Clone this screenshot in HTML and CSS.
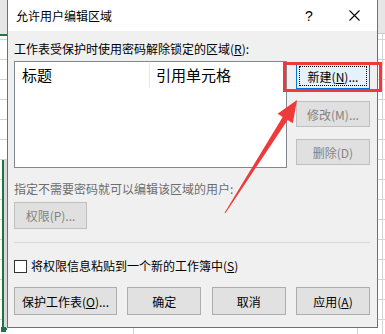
FILE: index.html
```html
<!DOCTYPE html>
<html lang="zh-CN">
<head>
<meta charset="utf-8">
<title>允许用户编辑区域</title>
<link rel="stylesheet" href="styles.css">
</head>
<body>
<div class="sheet">
  <div class="sheet-left"><div class="sel"></div><div class="handle"></div></div>
  <div class="sheet-right"></div>
</div>

<div class="dialog">
  <div class="titlebar">
    <span class="title">允许用户编辑区域</span>
    <span class="tb-btn help">?</span>
    <span class="tb-btn close">
      <svg width="11" height="11" viewBox="0 0 11 11"><path d="M0.5 0.5 L10.5 10.5 M10.5 0.5 L0.5 10.5" stroke="#000" stroke-width="1.1" fill="none"/></svg>
    </span>
  </div>
  <div class="content">
    <div class="label">工作表受保护时使用密码解除锁定的区域(<u>R</u>):</div>
    <div class="top-row">
      <div class="listbox">
        <div class="lhead">
          <div class="col col1">标题</div>
          <div class="col col2">引用单元格</div>
        </div>
      </div>
      <div class="side">
        <button class="btn focused"><span class="ring">新建(<u>N</u>)...</span></button>
        <button class="btn" disabled>修改(M)...</button>
        <button class="btn" disabled>删除(D)</button>
      </div>
    </div>
    <div class="label dim">指定不需要密码就可以编辑该区域的用户:</div>
    <button class="btn perm" disabled>权限(P)...</button>
    <div class="sep"></div>
    <div class="check"><span class="box"></span><span>将权限信息粘贴到一个新的工作簿中(<u>S</u>)</span></div>
    <div class="footer">
      <button class="btn wide">保护工作表(<u>O</u>)...</button>
      <button class="btn">确定</button>
      <button class="btn">取消</button>
      <button class="btn">应用(<u>A</u>)</button>
    </div>
  </div>
</div>

<div class="annot-rect"></div>
<svg class="arrow" width="385" height="334" viewBox="0 0 385 334">
  <polygon points="224.6,212.7 225.4,213.3 287.7,120.1 292.8,123.3 297,100 277.6,113.7 282.7,116.9" fill="#f03a3a"/>
</svg>
</body>
</html>
```

FILE: styles.css
```css
* { box-sizing: border-box; }

body {
  margin: 0;
  width: 385px;
  height: 334px;
  overflow: hidden;
  position: relative;
  background-color: #ffffff;
  background-image:
    linear-gradient(to right, transparent 133px, #d4d4d4 133px, #d4d4d4 134px, transparent 134px),
    linear-gradient(to right, transparent 357px, #d4d4d4 357px, #d4d4d4 358px, transparent 358px);
  font-family: "Noto Sans CJK SC", "Microsoft YaHei", sans-serif;
  font-size: 12px;
  color: #000;
}

/* spreadsheet behind the dialog */
.sheet-left {
  position: absolute;
  left: 0;
  top: 0;
  width: 7px;
  height: 334px;
  background:
    linear-gradient(#e6e6e6 0, #e6e6e6 34px, #217346 34px, #217346 36px, transparent 36px),
    repeating-linear-gradient(#ffffff 0, #ffffff 19px, #d4d4d4 19px, #d4d4d4 20px);
}
.sel {
  position: absolute;
  left: 2px;
  top: 160px;
  width: 5px;
  height: 170px;
  border-left: 2px solid #217346;
  border-bottom: 2px solid #217346;
  background: #d9d9d9;
}
.handle {
  position: absolute;
  left: 1px;
  top: 327px;
  width: 5px;
  height: 5px;
  background: #217346;
}
.sheet-right {
  position: absolute;
  left: 378px;
  top: 0;
  width: 7px;
  height: 334px;
  background:
    linear-gradient(#e6e6e6 0, #e6e6e6 33px, #c8c8c8 33px, #c8c8c8 34px, transparent 34px),
    linear-gradient(to right, transparent 4px, #d4d4d4 4px, #d4d4d4 5px, transparent 5px),
    repeating-linear-gradient(#ffffff 0, #ffffff 19px, #d4d4d4 19px, #d4d4d4 20px);
}

/* dialog window */
.dialog {
  position: absolute;
  left: 7px;
  top: 0;
  width: 371px;
  height: 328px;
  background: #f0f0f0;
  border: 1px solid #707070;
  border-top: none;
  display: flex;
  flex-direction: column;
}

.titlebar {
  height: 31px;
  background: #ffffff;
  display: flex;
  align-items: center;
  padding-left: 8px;
}
.title {
  flex: 1;
  font-size: 12px;
  line-height: 16px;
}
.tb-btn {
  height: 31px;
  display: flex;
  align-items: center;
  justify-content: center;
}
.help {
  width: 44px;
  font-family: "Liberation Sans", sans-serif;
  font-size: 14px;
}
.close {
  width: 46px;
}

.content {
  padding: 10px 7px 0 6px;
  display: flex;
  flex-direction: column;
  align-items: flex-start;
}

.label {
  line-height: 16px;
  height: 16px;
  white-space: nowrap;
}
.label.dim {
  color: #6d6d6d;
  margin-top: 13px;
}

u { text-decoration: underline; text-underline-offset: 1px; }

.top-row {
  margin-top: 4px;
  display: flex;
  width: 100%;
}
.listbox {
  width: 273px;
  height: 107px;
  background: #ffffff;
  border: 1px solid #828790;
}
.lhead {
  display: flex;
  height: 26px;
  padding-top: 1px;
}
.col {
  font-size: 15px;
  line-height: 24px;
}
.col1 {
  width: 135px;
  padding-left: 7px;
  border-right: 1px solid #e5e5e5;
}
.col2 {
  padding-left: 6px;
}
.side {
  margin-left: 9px;
  padding-top: 2px;
  display: flex;
  flex-direction: column;
  gap: 12px;
}

.btn {
  width: 74px;
  height: 26px;
  padding: 0;
  background: #e1e1e1;
  border: 1px solid #adadad;
  font-family: inherit;
  font-size: 12px;
  color: #000;
  display: flex;
  align-items: center;
  justify-content: center;
  white-space: nowrap;
}
.btn:disabled {
  color: #838383;
  border-color: #bfbfbf;
  background: #e0e0e0;
}
.btn.focused {
  background: #e5f1fb;
  border-color: #0078d7;
  padding: 2px;
}
.ring {
  width: 100%;
  height: 100%;
  border: 1px dotted #000;
  display: flex;
  align-items: center;
  justify-content: center;
}
.perm {
  margin-top: 5px;
  width: 73px;
  height: 27px;
}
.sep {
  margin-top: 13px;
  width: 100%;
  height: 1px;
  background: #d8d8d8;
}
.check {
  margin-top: 15px;
  height: 16px;
  display: flex;
  align-items: center;
  line-height: 16px;
  white-space: nowrap;
}
.box {
  width: 13px;
  height: 13px;
  background: #ffffff;
  border: 1px solid #333333;
  margin-right: 4px;
}
.footer {
  margin-top: 13px;
  width: 100%;
  display: flex;
  justify-content: space-between;
}
.footer .btn {
  height: 28px;
}
.footer .btn.wide {
  width: 103px;
}

/* annotation overlay */
.annot-rect {
  position: absolute;
  left: 283px;
  top: 62px;
  width: 99px;
  height: 30px;
  border: 3px solid #f03a3a;
}
.arrow {
  position: absolute;
  left: 0;
  top: 0;
  pointer-events: none;
}
```
